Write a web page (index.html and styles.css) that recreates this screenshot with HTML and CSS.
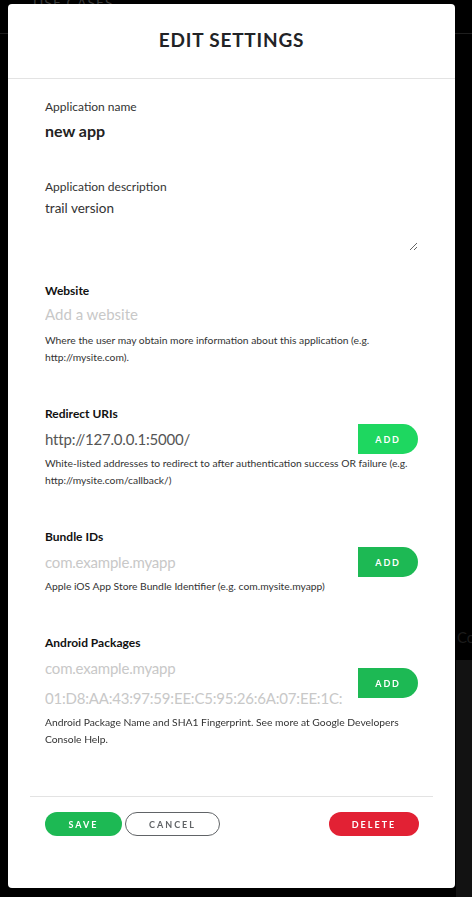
FILE: index.html
```html
<!DOCTYPE html>
<html lang="en">
<head>
  <meta charset="UTF-8">
  <title>Edit Settings</title>
  <link rel="stylesheet" href="styles.css">
</head>
<body>

<div class="page">
  <div class="topnav"><span>USE CASES</span></div>
  <div class="page-panel"><span>Co</span></div>
</div>

<div class="modal">
  <div class="modal-header">
    <h2>EDIT SETTINGS</h2>
  </div>

  <form class="modal-body">
    <div class="field">
      <label class="label-light">Application name</label>
      <input class="input-strong" type="text" value="new app">
    </div>

    <div class="field">
      <label class="label-light">Application description</label>
      <textarea class="input-area">trail version</textarea>
    </div>

    <div class="field">
      <label class="label">Website</label>
      <input class="input-small" type="text" placeholder="Add a website">
      <p class="help">Where the user may obtain more information about this application (e.g. http://mysite.com).</p>
    </div>

    <div class="field">
      <label class="label">Redirect URIs</label>
      <div class="add-row">
        <div class="inputs">
          <input class="input" type="text" value="http://127.0.0.1:5000/">
        </div>
        <button type="button" class="btn-add active">ADD</button>
      </div>
      <p class="help">White-listed addresses to redirect to after authentication success OR failure (e.g. http://mysite.com/callback/)</p>
    </div>

    <div class="field">
      <label class="label">Bundle IDs</label>
      <div class="add-row">
        <div class="inputs">
          <input class="input" type="text" placeholder="com.example.myapp">
        </div>
        <button type="button" class="btn-add">ADD</button>
      </div>
      <p class="help">Apple iOS App Store Bundle Identifier (e.g. com.mysite.myapp)</p>
    </div>

    <div class="field">
      <label class="label">Android Packages</label>
      <div class="add-row">
        <div class="inputs">
          <input class="input" type="text" placeholder="com.example.myapp">
          <input class="input" type="text" placeholder="01:D8:AA:43:97:59:EE:C5:95:26:6A:07:EE:1C:">
        </div>
        <button type="button" class="btn-add">ADD</button>
      </div>
      <p class="help">Android Package Name and SHA1 Fingerprint. See more at Google Developers Console Help.</p>
    </div>
  </form>

  <div class="modal-footer">
    <button type="button" class="btn btn-save">SAVE</button>
    <button type="button" class="btn btn-cancel">CANCEL</button>
    <button type="button" class="btn btn-delete">DELETE</button>
  </div>
</div>

</body>
</html>
```

FILE: styles.css
```css
* {
  box-sizing: border-box;
  margin: 0;
  padding: 0;
}

body {
  font-family: 'Lato', 'Open Sans', sans-serif;
  background: #000000;
  min-height: 100vh;
  color: #222222;
  overflow: hidden;
}

/* page behind the modal */
.page {
  height: 897px;
  display: flex;
  flex-direction: column;
}

.topnav {
  height: 34px;
  border-bottom: 1px solid #1e1e1e;
  padding-left: 33px;
}

.topnav span {
  display: block;
  margin-top: -6px;
  font-size: 14px;
  color: #3a3a3a;
  letter-spacing: 1px;
}

.page-panel {
  margin: 590px 0 0 456px;
  flex: 1;
  background: linear-gradient(180deg, #000 0, #000 36px, #121212 36px);
  padding-left: 1px;
  overflow: hidden;
}

.page-panel span {
  display: block;
  margin-top: 4px;
  font-size: 15px;
  color: #1c1c1c;
}

/* modal */
.modal {
  position: fixed;
  top: 4px;
  left: 8px;
  width: 447px;
  height: 884px;
  background: #ffffff;
  border-radius: 4px;
  display: flex;
  flex-direction: column;
}

.modal-header {
  height: 75px;
  border-bottom: 1px solid #e3e3e3;
  display: flex;
  align-items: center;
  justify-content: center;
  padding-bottom: 3px;
}

.modal-header h2 {
  font-size: 19px;
  font-weight: 700;
  letter-spacing: 0.8px;
  color: #222326;
}

.modal-body {
  flex: 1;
  padding: 20px 37px 0;
  display: flex;
  flex-direction: column;
}

.field {
  display: flex;
  flex-direction: column;
  margin-bottom: 40px;
}

.field:first-child {
  margin-bottom: 39px;
}

.label-light {
  font-size: 12px;
  line-height: 16px;
  color: #333333;
}

.label {
  font-size: 12px;
  line-height: 16px;
  font-weight: 700;
  color: #111111;
}

input, textarea {
  border: none;
  outline: none;
  background: transparent;
  font-family: inherit;
  width: 100%;
  padding: 0;
}

.input-strong {
  margin-top: 5px;
  height: 20px;
  font-size: 16px;
  font-weight: 700;
  color: #222222;
}

.input-area {
  margin-top: 4px;
  height: 52px;
  font-size: 13.5px;
  line-height: 18px;
  color: #333333;
  resize: vertical;
  margin-bottom: -8px;
}

.input-small {
  margin-top: 5px;
  height: 20px;
  font-size: 15px;
  color: #333333;
}

.input {
  height: 30px;
  font-size: 15px;
  letter-spacing: -0.2px;
  color: #555555;
}

::placeholder {
  color: #c8c8c8;
  opacity: 1;
}

.help {
  margin-top: 8px;
  font-size: 10.3px;
  line-height: 17px;
  color: #333333;
}

.add-row {
  display: flex;
  align-items: center;
  gap: 8px;
  margin-top: 2px;
}

.add-row + .help {
  margin-top: 1px;
}

.inputs {
  flex: 1;
  display: flex;
  flex-direction: column;
  min-width: 0;
}

.btn-add {
  width: 60px;
  height: 30px;
  border: none;
  border-radius: 0 15px 15px 0;
  background: #1db954;
  color: #ffffff;
  font-family: inherit;
  font-size: 9px;
  font-weight: 700;
  letter-spacing: 1.8px;
  cursor: pointer;
}

.btn-add.active {
  background: #1ed760;
}

/* footer */
.modal-footer {
  margin: 0 22px;
  border-top: 1px solid #e3e3e3;
  padding: 15px 14px 52px 15px;
  display: flex;
  align-items: center;
  gap: 3px;
}

.btn {
  height: 24px;
  border-radius: 12px;
  font-family: inherit;
  font-size: 9px;
  font-weight: 700;
  letter-spacing: 2px;
  cursor: pointer;
}

.btn-save {
  width: 77px;
  border: none;
  background: #1db954;
  color: #ffffff;
}

.btn-cancel {
  width: 95px;
  border: 1.5px solid #616467;
  background: #ffffff;
  color: #616467;
}

.btn-delete {
  width: 90px;
  margin-left: auto;
  border: none;
  background: #e22134;
  color: #ffffff;
}
```
